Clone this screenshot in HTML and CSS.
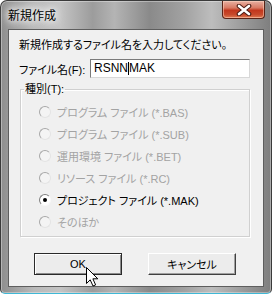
FILE: index.html
```html
<!DOCTYPE html>
<html lang="ja">
<head>
  <meta charset="UTF-8">
  <meta name="viewport" content="width=device-width, initial-scale=1.0">
  <title>新規作成</title>
  <link rel="stylesheet" href="styles.css">
</head>
<body>
  <div class="window">
    <div class="titlebar">
      <span class="title">新規作成</span>
      <button class="close" aria-label="閉じる">
        <svg width="16" height="12" viewBox="0 0 16 12">
          <path d="M3 2 L13 10 M13 2 L3 10" stroke="#4a1a12" stroke-width="4.6" stroke-linecap="round"/>
          <path d="M3 2 L13 10 M13 2 L3 10" stroke="#fff" stroke-width="2.6" stroke-linecap="round"/>
        </svg>
      </button>
    </div>

    <div class="client">
      <p class="prompt">新規作成するファイル名を入力してください。</p>

      <div class="name-row">
        <label class="name-label">ファイル名(F):</label>
        <div class="textbox">RSNN<span class="caret"></span>MAK</div>
      </div>

      <fieldset class="group">
        <legend>種別(T):</legend>
        <div class="radio disabled"><span class="circle"></span>プログラム ファイル (*.BAS)</div>
        <div class="radio disabled"><span class="circle"></span>プログラム ファイル (*.SUB)</div>
        <div class="radio disabled"><span class="circle"></span>運用環境 ファイル (*.BET)</div>
        <div class="radio disabled"><span class="circle"></span>リソース ファイル (*.RC)</div>
        <div class="radio checked"><span class="circle"></span>プロジェクト ファイル (*.MAK)</div>
        <div class="radio disabled"><span class="circle"></span>そのほか</div>
      </fieldset>

      <div class="buttons">
        <button class="btn default">OK</button>
        <button class="btn">キャンセル</button>
      </div>
    </div>

    <svg class="cursor" width="14" height="22" viewBox="0 0 14 22">
      <path d="M1.5 1.5 L1.5 17.5 L5.2 13.8 L8 20 L10.6 18.9 L7.9 12.8 L12.8 12.8 Z" fill="#fff" stroke="#000" stroke-width="1" stroke-linejoin="miter"/>
    </svg>
  </div>
</body>
</html>
```

FILE: styles.css
```css
body {
  margin: 0;
  padding: 0;
  background: #ffffff;
  font-family: 'Liberation Sans', 'Noto Sans CJK JP', sans-serif;
  font-size: 11px;
  font-feature-settings: "palt";
  color: #000;
}
.window {
  position: relative;
  width: 272px;
  height: 294px;
  box-sizing: border-box;
  border: 1px solid #3a3a3a;
  border-bottom-color: #3fb8d6;
  border-radius: 7px 7px 5px 5px;
  padding: 0 7px 6px 7px;
  display: flex;
  flex-direction: column;
  background: linear-gradient(90deg, #8e8e8e 0%, #b9b9b9 12%, #c4c4c4 22%, #9c9c9c 34%, #b4b4b4 42%, #8a8a8a 55%, #a2a2a2 68%, #bdbdbd 78%, #9a9a9a 90%, #7e7e7e 100%);
  box-shadow: inset 0 0 0 1px rgba(255, 255, 255, 0.35);
}
.titlebar {
  height: 28px;
  display: flex;
  align-items: flex-start;
  flex-shrink: 0;
}
.title {
  align-self: center;
  line-height: 16px;
  font-size: 12px;
  font-family: 'Noto Sans CJK JP', sans-serif;
  text-shadow: 0 0 6px #fff, 0 0 10px #fff, 0 0 14px #fff;
}
.close {
  margin-left: auto;
  margin-right: -1px;
  width: 43px;
  height: 18px;
  padding: 0;
  border: 1px solid #5a2418;
  border-top: none;
  border-radius: 0 0 4px 4px;
  background: linear-gradient(180deg, #e8b0a2 0%, #d87a64 40%, #c2371d 55%, #c84a2c 80%, #e07a52 100%);
  box-shadow: inset 0 0 0 1px rgba(255, 220, 200, 0.5);
  display: flex;
  align-items: center;
  justify-content: center;
}
.client {
  flex: 1;
  background: #f0f0f0;
  border: 1px solid #5e5e5e;
  padding: 7px 0 0 10px;
}
.prompt {
  margin: 0;
  line-height: 16px;
  height: 16px;
  white-space: nowrap;
}
.name-row {
  margin-top: 6px;
  display: flex;
  align-items: center;
  height: 19px;
}
.name-label {
  width: 71px;
  flex-shrink: 0;
  white-space: nowrap;
}
.textbox {
  width: 160px;
  height: 19px;
  box-sizing: border-box;
  background: #fff;
  border: 1px solid;
  border-color: #7a7a7a #d8d8d8 #d8d8d8 #7a7a7a;
  padding-left: 3px;
  font-size: 12px;
  line-height: 17px;
  display: flex;
  align-items: center;
}
.caret {
  display: inline-block;
  width: 1px;
  height: 13px;
  background: #000;
}
.group {
  margin: 4px 0 0 1px;
  width: 230px;
  box-sizing: border-box;
  padding: 5px 0 3px 0;
  border: 1px solid #d0d0d0;
  box-shadow: inset 1px 1px #fff, 1px 1px #fff;
}
.group legend {
  margin-left: 3px;
  padding: 0 1px;
  line-height: 14px;
}
.radio {
  height: 22px;
  display: flex;
  align-items: center;
  padding-left: 18px;
  gap: 6px;
  white-space: nowrap;
}
.radio.disabled {
  color: #a3a3a3;
}
.circle {
  width: 12px;
  height: 12px;
  flex-shrink: 0;
  box-sizing: border-box;
  border-radius: 50%;
  border: 1px solid #a8a8a8;
  border-right-color: #e4e4e4;
  border-bottom-color: #e4e4e4;
  background: #f4f4f4;
  display: flex;
  align-items: center;
  justify-content: center;
}
.radio.checked .circle {
  border-color: #808080 #f8f8f8 #f8f8f8 #808080;
  background: #fff;
}
.radio.checked .circle::after {
  content: "";
  width: 4px;
  height: 4px;
  border-radius: 50%;
  background: #000;
}
.buttons {
  margin: 16px 0 0 15px;
  display: flex;
  gap: 26px;
}
.btn {
  width: 88px;
  height: 22px;
  padding: 0;
  font: inherit;
  background: #ececec;
  border: 1px solid;
  border-color: #fff #404040 #404040 #fff;
  box-shadow: inset -1px -1px #a0a0a0;
  color: #000;
}
.btn.default {
  border: 1px solid #2a2a2a;
  box-shadow: inset 1px 1px #fff, inset -1px -1px #8a8a8a;
}
.cursor {
  position: absolute;
  left: 84px;
  top: 265px;
}
```
